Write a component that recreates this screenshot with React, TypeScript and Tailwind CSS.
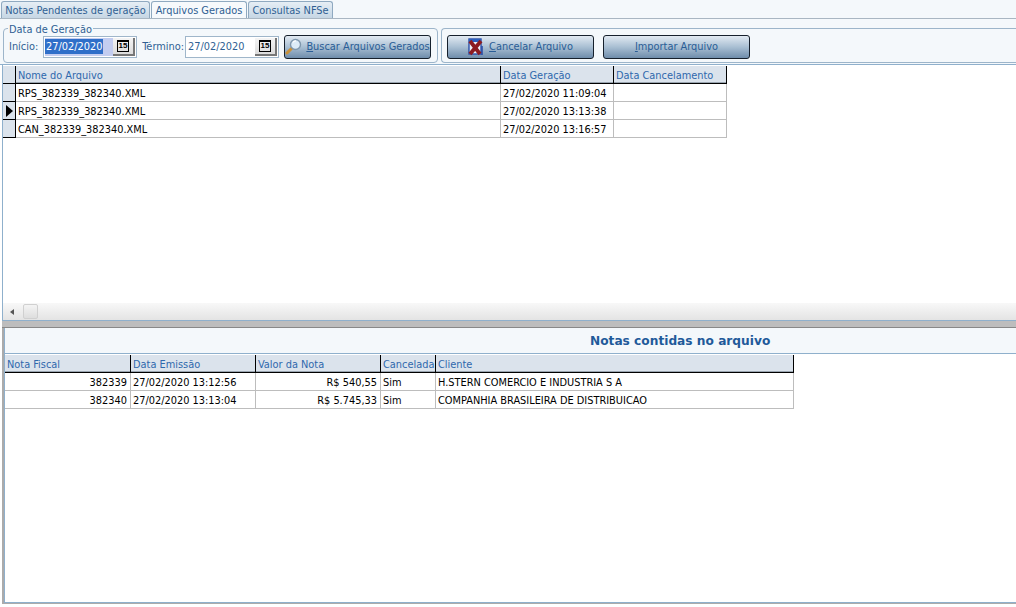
import { ReactNode } from 'react';

const upperRows = [
  { name: 'RPS_382339_382340.XML', date: '27/02/2020 11:09:04', current: false },
  { name: 'RPS_382339_382340.XML', date: '27/02/2020 13:13:38', current: true },
  { name: 'CAN_382339_382340.XML', date: '27/02/2020 13:16:57', current: false },
];

const lowerRows = [
  { nota: '382339', date: '27/02/2020 13:12:56', valor: 'R$ 540,55', canc: 'Sim', cliente: 'H.STERN COMERCIO E INDUSTRIA S A' },
  { nota: '382340', date: '27/02/2020 13:13:04', valor: 'R$ 5.745,33', canc: 'Sim', cliente: 'COMPANHIA BRASILEIRA DE DISTRIBUICAO' },
];

function Tab({ label, active, width }: { label: string; active?: boolean; width: string }) {
  return (
    <div
      className={`${width} h-[17px] pt-[2px] flex items-center justify-center whitespace-nowrap rounded-t-[3px] border border-b-0 border-[#8fa9c0] text-[#2f5f93] ${
        active ? 'bg-[#f6f9fc]' : 'bg-gradient-to-b from-[#e6eef5] to-[#c6d6e4]'
      }`}
    >
      {label}
    </div>
  );
}

function CalendarIcon() {
  return (
    <div className="w-[22px] h-[18px] flex-none bg-gradient-to-b from-[#f4f4f4] to-[#dcdcdc] border-r-2 border-b-2 border-[#777] flex items-center justify-center">
      <div className="w-[12px] h-[12px] border border-black border-t-2 flex items-center justify-center text-[8px] leading-none font-bold text-black font-['Liberation_Sans',sans-serif]">
        15
      </div>
    </div>
  );
}

function DateField({ width, selected }: { width: string; selected?: boolean }) {
  return (
    <div className={`${width} h-[22px] flex-none bg-white border border-[#9fb6ca] flex items-center justify-between px-[1px]`}>
      <div className={`flex-1 h-[18px] flex items-center ${selected ? 'bg-[#c3cdf0]' : ''}`}>
        <span className={`px-[1px] h-[15px] leading-[15px] ${selected ? 'bg-[#2f6fc9] text-white' : 'text-[#2f5f93]'}`}>27/02/2020</span>
      </div>
      <CalendarIcon />
    </div>
  );
}

function ActionButton({ width, children }: { width: string; children: ReactNode }) {
  return (
    <div
      className={`${width} h-[24px] flex-none whitespace-nowrap rounded-[3px] border border-[#16202c] bg-gradient-to-b from-[#e2eaf2] via-[#a9bfd3] to-[#6f8dab] flex items-center justify-center gap-[4px] text-[#2a5d96]`}
    >
      {children}
    </div>
  );
}

function SearchIcon() {
  return (
    <svg width="17" height="17" viewBox="0 0 17 17" className="flex-none">
      <line x1="2" y1="15" x2="7" y2="10" stroke="#c9913a" strokeWidth="3" strokeLinecap="round" />
      <circle cx="10.5" cy="6.5" r="5" fill="#dcebf7" stroke="#7f97ad" strokeWidth="1.4" />
      <path d="M8 4.5a3 3 0 0 1 3-1.5" stroke="#fff" strokeWidth="1.2" fill="none" />
    </svg>
  );
}

function CancelIcon() {
  return (
    <svg width="17" height="18" viewBox="0 0 17 18" className="flex-none">
      <rect x="1" y="1" width="12" height="15" fill="#eef3fa" stroke="#2a4fa8" strokeWidth="1.4" />
      <rect x="1" y="1" width="12" height="3" fill="#2a5fc0" />
      <path d="M14 8v9" stroke="#2a4fa8" strokeWidth="1.6" />
      <path d="M2 3l10 13M13 3L2 16" stroke="#8c1c22" strokeWidth="3.8" />
    </svg>
  );
}

function HeaderCell({ children }: { children: ReactNode }) {
  return (
    <div className="h-full flex items-center pl-[2px] pt-[3px] bg-[#dbe3ec] border-r border-b border-black shadow-[inset_0_-1px_0_#9aa5b0] text-[#2f68ad] whitespace-nowrap overflow-hidden">
      {children}
    </div>
  );
}

function Cell({ children, right }: { children?: ReactNode; right?: boolean }) {
  return (
    <div className={`h-full flex items-center pt-[3px] border-r border-b border-[#bdbdbd] pl-[2px] pr-[3px] text-black whitespace-nowrap ${right ? 'justify-end' : ''}`}>
      {children}
    </div>
  );
}

function Indicator({ current }: { current?: boolean }) {
  return (
    <div className="h-full bg-[#dbe3ec] border-r border-b border-black flex items-center justify-center">
      {current && <div className="w-0 h-0 border-y-[6px] border-y-transparent border-l-[7px] border-l-black" />}
    </div>
  );
}

export default function App() {
  return (
    <div className="w-[1016px] h-[607px] bg-white flex flex-col overflow-hidden text-[10.9px] font-['DejaVu_Sans_Condensed','DejaVu_Sans',sans-serif]">
      {/* tabs */}
      <div className="h-[19px] flex-none bg-[#f4f8fb] border-b border-[#a9b6c2] flex items-end pl-[1px] gap-[1px]">
        <Tab label="Notas Pendentes de geração" width="w-[149px]" />
        <Tab label="Arquivos Gerados" active width="w-[96px]" />
        <Tab label="Consultas NFSe" width="w-[85px]" />
      </div>

      {/* toolbar */}
      <div className="h-[46px] flex-none bg-[#f4f8fb] border-b border-[#8fb0cc] flex pl-[3px] pt-[9px] gap-[3px]">
        <div className="relative w-[435px] h-[35px] flex-none border border-[#9db5ca] rounded-[4px] flex items-center pl-[5px] pt-[2px]">
          <div className="absolute -top-[5px] left-[4px] px-[1px] bg-[#f4f8fb] leading-[12px] text-[#2f5f93]">Data de Geração</div>
          <span className="w-[34px] flex-none pt-[1px] text-[#2f5f93]">Início:</span>
          <DateField width="w-[94px]" selected />
          <span className="w-[48px] flex-none pt-[1px] pr-[1px] text-right text-[#2f5f93]">Término:</span>
          <DateField width="w-[94px]" />
          <div className="ml-[5px]">
            <ActionButton width="w-[147px]">
              <SearchIcon />
              <span className="pt-[1px]"><u>B</u>uscar Arquivos Gerados</span>
            </ActionButton>
          </div>
        </div>
        <div className="flex-1 h-[35px] border border-r-0 border-[#9db5ca] rounded-l-[4px] flex items-center pl-[5px] pt-[2px] gap-[9px]">
          <ActionButton width="w-[147px]">
            <CancelIcon />
            <span className="pt-[1px]"><u>C</u>ancelar Arquivo</span>
          </ActionButton>
          <ActionButton width="w-[147px]">
            <span className="pt-[1px]"><u>I</u>mportar Arquivo</span>
          </ActionButton>
        </div>
      </div>

      <div className="flex-none flex flex-col pl-[2px]">
        {/* upper grid */}
        <div className="h-[256px] flex-none border-l border-[#8fb0cc] flex flex-col bg-white">
          <div className="flex-1 pt-[1px]">
            <div className="w-[724px] grid grid-cols-[13px_485px_113px_113px] grid-rows-[18px_18px_18px_18px]">
              <Indicator />
              <HeaderCell>Nome do Arquivo</HeaderCell>
              <HeaderCell>Data Geração</HeaderCell>
              <HeaderCell>Data Cancelamento</HeaderCell>
              {upperRows.map((row, i) => (
                <div key={i} className="contents">
                  <Indicator current={row.current} />
                  <Cell>{row.name}</Cell>
                  <Cell>{row.date}</Cell>
                  <Cell />
                </div>
              ))}
            </div>
          </div>
          <div className="h-[18px] flex-none bg-gradient-to-b from-[#f8f8f8] to-[#e4e4e4] flex items-center pl-[7px] gap-[9px] border-b border-[#8fb0cc]">
            <div className="w-0 h-0 border-y-[3px] border-y-transparent border-r-[4px] border-r-[#555]" />
            <div className="w-[15px] h-[15px] rounded-[2px] border border-[#d0d0d0] bg-gradient-to-b from-[#f4f4f4] to-[#dedede]" />
          </div>
        </div>

        {/* splitter */}
        <div className="h-[7px] flex-none bg-[#bdbdbd] border-b border-[#888]" />

        {/* lower panel */}
        <div className="h-[276px] flex-none border-l-2 border-l-[#ababab] border-b border-b-[#ababab] flex flex-col bg-white">
          <div className="flex-1 flex flex-col border-l border-b border-[#8fb0cc]">
            <div className="h-[26px] flex-none pt-[2px] bg-[#f4f8fb] border-b border-[#8fb0cc] flex items-center pl-[585px]">
              <span className="text-[12.2px] font-bold text-[#1f5a9a] whitespace-nowrap font-['DejaVu_Sans',sans-serif]">Notas contidas no arquivo</span>
            </div>
            <div className="flex-1 pt-[1px]">
              <div className="w-[789px] grid grid-cols-[126px_125px_125px_55px_358px] grid-rows-[18px_18px_18px]">
                <HeaderCell>Nota Fiscal</HeaderCell>
                <HeaderCell>Data Emissão</HeaderCell>
                <HeaderCell>Valor da Nota</HeaderCell>
                <HeaderCell>Cancelada</HeaderCell>
                <HeaderCell>Cliente</HeaderCell>
                {lowerRows.map((row) => (
                  <div key={row.nota} className="contents">
                    <Cell right>{row.nota}</Cell>
                    <Cell>{row.date}</Cell>
                    <Cell right>{row.valor}</Cell>
                    <Cell>{row.canc}</Cell>
                    <Cell>{row.cliente}</Cell>
                  </div>
                ))}
              </div>
            </div>
          </div>
        </div>
      </div>
    </div>
  );
}
